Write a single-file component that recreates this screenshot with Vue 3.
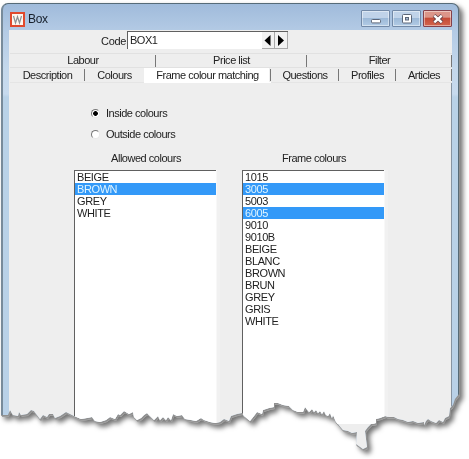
<script setup>
const upperTabs = [
  { label: 'Labour', width: 146 },
  { label: 'Price list', width: 151 },
  { label: 'Filter', width: 145 },
]
const lowerTabs = [
  { label: 'Description', width: 75 },
  { label: 'Colours', width: 59, plain: true },
  { label: 'Frame colour matching', width: 127, active: true },
  { label: 'Questions', width: 68 },
  { label: 'Profiles', width: 57 },
  { label: 'Articles', width: 56 },
]
const lists = [
  {
    title: 'Allowed colours',
    items: ['BEIGE', 'BROWN', 'GREY', 'WHITE'],
    selected: ['BROWN'],
  },
  {
    title: 'Frame colours',
    items: ['1015', '3005', '5003', '6005', '9010', '9010B', 'BEIGE', 'BLANC', 'BROWN', 'BRUN', 'GREY', 'GRIS', 'WHITE'],
    selected: ['3005', '6005'],
  },
]
</script>

<template>
  <div class="page">
    <div class="shadow">
      <main class="window">
        <header class="titlebar">
          <svg class="logo" width="15" height="15" viewBox="0 0 15 15"><rect x="1" y="1" width="13" height="13" fill="#fdf6ee" stroke="#e0492c" stroke-width="2" /><path d="M3.5 4 5.5 11 7.5 4.8 9.5 11 11.5 4" fill="none" stroke="#8c8f92" stroke-width="1.2" /></svg>
          <span class="title">Box</span>
          <div class="controls">
            <button class="control" aria-label="Minimise">
              <svg width="12" height="12" viewBox="0 0 12 12"><rect x="1.5" y="6.5" width="9" height="3.4" rx="1" fill="#fff" stroke="#5c6678" /></svg>
            </button>
            <button class="control" aria-label="Maximise">
              <svg width="12" height="12" viewBox="0 0 12 12"><rect x="1.5" y="1.5" width="9" height="8.5" rx="1" fill="#fff" stroke="#5c6678" /><rect x="4.5" y="4.5" width="3" height="2.5" fill="#a9bbd3" stroke="#5c6678" /></svg>
            </button>
            <button class="control close" aria-label="Close">
              <svg width="12" height="12" viewBox="0 0 12 12"><path d="M2 2.5 10 9.5M10 2.5 2 9.5" stroke="#684348" stroke-width="4" /><path d="M2.3 2.7 9.7 9.3M9.7 2.7 2.3 9.3" stroke="#fff" stroke-width="2.4" /></svg>
            </button>
          </div>
        </header>

        <div class="client">
          <div class="code-row">
            <label class="code-label" for="code">Code</label>
            <div id="code" class="code-field">
              <span class="code-value">BOX1</span>
              <span class="step"><svg width="12" height="15" viewBox="0 0 12 15"><path d="M8.5 2v11L2.5 7.5z" /></svg></span>
              <span class="step"><svg width="12" height="15" viewBox="0 0 12 15"><path d="M3 2v11L9 7.5z" /></svg></span>
            </div>
          </div>

          <nav class="tabs">
            <div class="tab-row upper">
              <span v-for="tab in upperTabs" :key="tab.label" class="tab" :style="{ width: tab.width + 'px' }">{{ tab.label }}</span>
            </div>
            <div class="tab-row lower">
              <span v-for="tab in lowerTabs" :key="tab.label" class="tab" :class="{ active: tab.active, plain: tab.plain }" :style="{ width: tab.width + 'px' }">{{ tab.label }}</span>
            </div>
          </nav>

          <section class="panel">
            <div class="radios">
              <div class="radio"><i class="dot checked"></i><span>Inside colours</span></div>
              <div class="radio"><i class="dot"></i><span>Outside colours</span></div>
            </div>
            <div class="lists">
              <div v-for="list in lists" :key="list.title" class="list">
                <h2>{{ list.title }}</h2>
                <ul>
                  <li v-for="item in list.items" :key="item" :class="{ selected: list.selected.includes(item) }">{{ item }}</li>
                </ul>
              </div>
            </div>
          </section>
        </div>
      </main>
    </div>
  </div>
</template>

<style>
body {
  background: #fff;
  overflow: hidden;
}
</style>

<style scoped>
* {
  box-sizing: border-box;
}
.page {
  width: 469px;
  height: 459px;
  padding: 3px 0 0 1px;
  overflow: hidden;
  font: 11px/12px "Liberation Sans", Arial, sans-serif;
  letter-spacing: -0.48px;
  color: #222;
}
.shadow {
  width: 458px;
  height: 456px;
  filter: drop-shadow(1px 1px 0 #909090) drop-shadow(0 1px 0 #a0a0a0) drop-shadow(3px 3px 2.5px rgba(0, 0, 0, 0.55));
}
.window {
  width: 458px;
  height: 456px;
  padding: 0 6px 0 6px;
  border: 1px solid #566b78;
  border-left: 2px solid #788b9b;
  border-radius: 7px 7px 0 0;
  background: linear-gradient(180deg, #a0bbdb 0, #b4cbe5 28px, #c4d8ec 65px, #c7daee 90px, #b9d2e8 93px, #b9d1e8 100%);
  clip-path: polygon(0 0, 458px 0, 458px 391px, 454px 396px, 452px 402px, 449px 405px, 448px 413px, 444px 415px, 442px 419px, 438px 417px, 435px 420px, 430px 418px, 427px 416px, 425px 418px, 423px 422px, 423px 419px, 417px 420px, 412px 418px, 407px 419px, 402px 417px, 397px 416px, 393px 414px, 388px 414px, 384px 413px, 379px 415px, 375px 416px, 375px 420px, 370px 421px, 367px 424px, 364px 428px, 366px 444px, 362px 446px, 355px 441px, 356px 429px, 351px 430px, 347px 428px, 342px 427px, 337px 421px, 335px 419px, 332px 412px, 331px 415px, 329px 410px, 327px 413px, 325px 412px, 323px 408px, 321px 411px, 319px 408px, 317px 410px, 315px 407px, 313px 409px, 311px 406px, 308px 409px, 304px 404px, 302px 409px, 297px 409px, 292px 407px, 288px 403px, 282px 402px, 277px 400px, 273px 400px, 273px 404px, 268px 405px, 262px 407px, 261px 411px, 256px 409px, 253px 413px, 249px 418px, 243px 413px, 241px 410px, 236px 411px, 230px 413px, 228px 418px, 223px 416px, 219px 419px, 214px 420px, 209px 419px, 203px 417px, 200px 415px, 195px 418px, 190px 417px, 184px 416px, 181px 412px, 176px 413px, 172px 411px, 170px 417px, 167px 414px, 165px 417px, 162px 414px, 159px 417px, 157px 413px, 153px 417px, 149px 413px, 146px 410px, 143px 412px, 140px 415px, 136px 417px, 133px 414px, 132px 409px, 128px 411px, 123px 408px, 119px 412px, 117px 411px, 114px 416px, 109px 414px, 105px 417px, 99px 419px, 94px 418px, 91px 414px, 86px 415px, 80px 416px, 73px 413px, 69px 411px, 65px 409px, 59px 413px, 54px 415px, 52px 411px, 48px 411px, 46px 414px, 42px 412px, 39px 416px, 36px 412px, 33px 408px, 30px 407px, 26px 411px, 20px 412px, 18px 409px, 17px 413px, 12px 412px, 9px 407px, 7px 412px, 0 412px);
}
.titlebar {
  display: flex;
  align-items: flex-start;
  height: 26px;
  padding: 8px 0 0 1px;
}
.logo {
  flex: none;
}
.title {
  margin-left: 3px;
  font-size: 12px;
  line-height: 15px;
  letter-spacing: -0.3px;
  color: #17202c;
}
.controls {
  display: flex;
  gap: 2px;
  margin: -2px 0 0 auto;
}
.control {
  display: flex;
  align-items: center;
  justify-content: center;
  width: 29px;
  height: 17px;
  padding: 0;
  border: 1px solid #7289a7;
  border-radius: 1px;
  background: linear-gradient(#c0d3e9 0 45%, #9bb8d7 46%, #b2cbe5);
  box-shadow: inset 0 0 0 1px rgba(255, 255, 255, 0.45);
}
.close {
  border-color: #84404a;
  background: linear-gradient(#dc9588 0 42%, #c44935 46%, #d3654d);
}
.client {
  height: 430px;
  background: #eee;
}
.code-row {
  display: flex;
  padding: 1px 0 0 92px;
}
.code-label {
  width: 26px;
  padding-top: 4px;
  letter-spacing: -0.3px;
}
.code-field {
  display: flex;
  width: 161px;
  height: 18px;
  border-top: 1px solid #606060;
  border-left: 1px solid #606060;
  background: #fff;
}
.code-value {
  flex: 1;
  padding: 2px 0 0 2px;
}
.step {
  display: flex;
  width: 13px;
  height: 17px;
  padding-top: 1px;
  border-right: 1px solid #aaa;
  border-bottom: 1px solid #aaa;
  background: #f2f2f2;
  fill: #000;
}
.tabs {
  width: 443px;
  padding: 4px 0 0 1px;
}
.tab-row {
  display: flex;
  border-top: 1px solid #e1e1e1;
}
.tab {
  position: relative;
  flex: none;
  text-align: center;
  white-space: nowrap;
}
.tab::after {
  content: "";
  position: absolute;
  right: 0;
  top: 1px;
  width: 1px;
  height: 12px;
  background: #777;
}
.upper .tab {
  height: 13px;
  line-height: 13px;
}
.lower .tab {
  height: 15px;
  line-height: 14px;
  border-bottom: 1px solid #e5e5e5;
}
.tab.plain::after {
  display: none;
}
.tab.active {
  background: linear-gradient(90deg, #fff 125px, #eee 125px);
  border-color: #fff;
}
.panel {
  padding: 24px 0 0 65px;
  border-right: 1px solid #8794a2;
}
.radios {
  display: grid;
  gap: 9px;
  padding-left: 17px;
}
.radio {
  display: flex;
  align-items: center;
  gap: 6px;
  height: 12px;
}
.dot {
  width: 9px;
  height: 9px;
  border: 1px solid;
  border-color: #777 #e8e8e8 #e8e8e8 #777;
  border-radius: 50%;
  background: #fff;
}
.dot.checked {
  background: radial-gradient(circle, #000 0 2px, #fff 2.7px);
}
.lists {
  display: flex;
  gap: 18px;
  padding-top: 12px;
}
.list {
  width: 150px;
}
h2 {
  margin: 0 0 6px;
  padding-right: 6px;
  font: inherit;
  text-align: center;
}
ul {
  width: 142px;
  height: 254px;
  margin: 0;
  padding: 0;
  border-top: 1px solid #606060;
  border-left: 1px solid #606060;
  background: #fff;
  box-shadow: 1px 0 0 #f8f8f8, 4px 0 0 #f1f1f1;
  list-style: none;
}
li {
  height: 12px;
  padding-left: 2px;
  letter-spacing: -0.4px;
}
li.selected {
  background: #3399f8;
  color: #e0f5ff;
}
</style>
